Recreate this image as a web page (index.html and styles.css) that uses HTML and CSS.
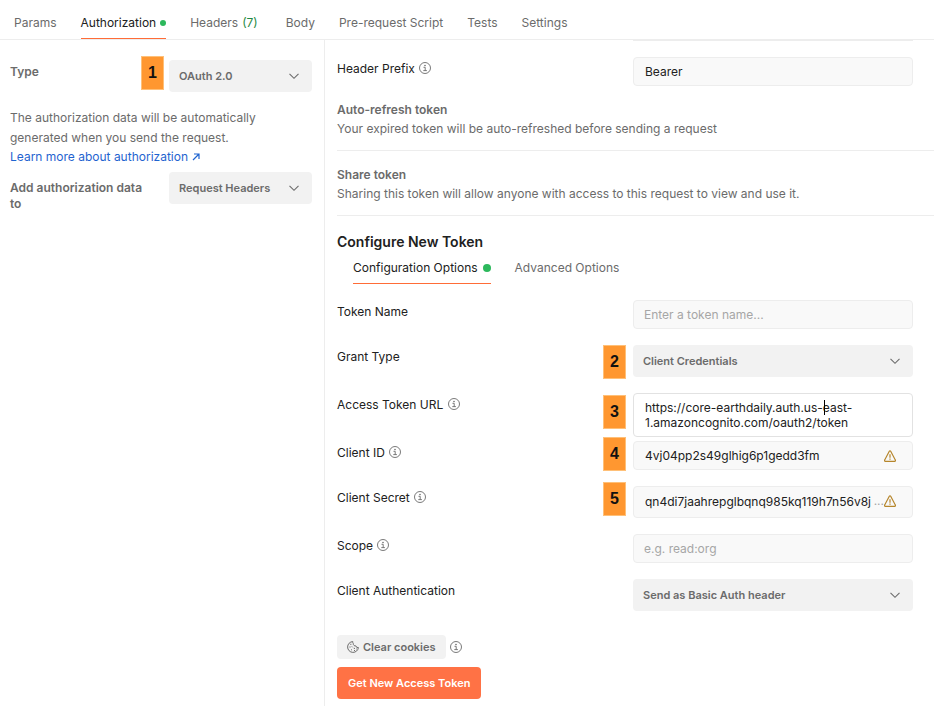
FILE: index.html
```html
<!DOCTYPE html>
<html lang="en">
<head>
<meta charset="utf-8">
<title>Authorization</title>
<meta name="viewport" content="width=device-width, initial-scale=1">
<link rel="stylesheet" href="styles.css">
</head>
<body>
<svg class="sprite" aria-hidden="true">
  <symbol id="chevron" viewBox="0 0 12 12"><path d="M1.500 3.800 6 8.300l4.500-4.500" fill="none" stroke="currentColor" stroke-width="1.100"/></symbol>
  <symbol id="info" viewBox="0 0 12 12"><circle cx="6" cy="6" r="5.500" fill="none" stroke="currentColor" stroke-width=".9"/><path d="M4.500 5.300H6.200V8.600M4.300 8.600H7.900" fill="none" stroke="currentColor" stroke-width=".9"/><circle cx="6" cy="3.500" r=".8" fill="currentColor"/></symbol>
  <symbol id="warn" viewBox="0 0 12 12"><path d="M5.300 1.200a.8.8 0 0 1 1.400 0L11.300 10a.8.8 0 0 1-.7 1.300H1.400A.8.8 0 0 1 .7 10Z" fill="none" stroke="currentColor" stroke-width="1.200"/><path d="M6 4.200v3.600M6 8.600v1.200" stroke="currentColor" stroke-width="1.200"/></symbol>
  <symbol id="cookie" viewBox="0 0 12 12"><path d="M5.800.6a5.400 5.400 0 1 0 5.600 5.900 2 2 0 0 1-2.500-1.600 2.100 2.100 0 0 1-2.600-2.300A2.400 2.400 0 0 1 5.800.6Z" fill="none" stroke="currentColor"/><path d="M3.200 3.300h1.200M2.400 6h1.200M4.800 5.400l.9.900M6.800 7.400h1.200M4 8.400l.9.700M7 9.500h1M9 8h.7" stroke="currentColor"/></symbol>
</svg>

<nav class="tabs" aria-label="Request">
  <a class="tab" href="#params">Params</a>
  <a class="tab tab--active" href="#authorization">Authorization<span class="dot"></span></a>
  <a class="tab tab--counted" href="#headers">Headers <span class="count">(7)</span></a>
  <a class="tab" href="#body">Body</a>
  <a class="tab" href="#scripts">Pre-request Script</a>
  <a class="tab" href="#tests">Tests</a>
  <a class="tab" href="#settings">Settings</a>
</nav>

<div class="layout">
  <aside class="side">
    <div class="side-row">
      <label class="side-label" for="type">Type</label>
      <div class="field">
        <span class="pin pin--raised">1</span>
        <select class="select" id="type"><option>OAuth 2.0</option></select>
        <svg class="chevron"><use href="#chevron"/></svg>
      </div>
    </div>
    <p class="help">The authorization data will be automatically generated when you send the request.</p>
    <a class="learn" href="#learn">Learn more about authorization <svg class="arrow" viewBox="0 0 8 8" aria-hidden="true"><path d="M1 7 7 1M2 1h5v5" fill="none" stroke="currentColor" stroke-width="1.200"/></svg></a>
    <div class="side-row side-row--wrapped">
      <label class="side-label" for="target">Add authorization data to</label>
      <div class="field">
        <select class="select" id="target"><option>Request Headers</option></select>
        <svg class="chevron"><use href="#chevron"/></svg>
      </div>
    </div>
  </aside>

  <main class="main">
    <div class="cut"></div>
    <div class="row">
      <label class="label" for="prefix">Header Prefix <svg class="info"><use href="#info"/></svg></label>
      <div class="field"><input class="input" id="prefix" value="Bearer"></div>
    </div>

    <section class="note">
      <h3 class="note-title">Auto-refresh token</h3>
      <p class="note-text">Your expired token will be auto-refreshed before sending a request</p>
    </section>
    <section class="note">
      <h3 class="note-title">Share token</h3>
      <p class="note-text">Sharing this token will allow anyone with access to this request to view and use it.</p>
    </section>

    <h2 class="heading">Configure New Token</h2>
    <nav class="subtabs" aria-label="Token">
      <a class="subtab subtab--active" href="#config">Configuration Options<span class="dot dot--large"></span></a>
      <a class="subtab" href="#advanced">Advanced Options</a>
    </nav>

    <form class="form">
      <div class="row">
        <label class="label" for="name">Token Name</label>
        <div class="field"><input class="input" id="name" placeholder="Enter a token name..."></div>
      </div>
      <div class="row">
        <label class="label" for="grant">Grant Type</label>
        <div class="field">
          <span class="pin">2</span>
          <select class="select" id="grant"><option>Client Credentials</option></select>
          <svg class="chevron"><use href="#chevron"/></svg>
        </div>
      </div>
      <div class="row row--tight">
        <label class="label" for="url">Access Token URL <svg class="info"><use href="#info"/></svg></label>
        <div class="field">
          <span class="pin pin--lowered">3</span>
          <textarea class="input input--area" id="url" rows="2" spellcheck="false">https://core-earthdaily.auth.us-east-1.amazoncognito.com/oauth2/token</textarea>
          <span class="caret"></span>
        </div>
      </div>
      <div class="row">
        <label class="label" for="client">Client ID <svg class="info"><use href="#info"/></svg></label>
        <div class="field">
          <span class="pin pin--raised">4</span>
          <input class="input input--warn" id="client" value="4vj04pp2s49glhig6p1gedd3fm">
          <svg class="warn"><use href="#warn"/></svg>
        </div>
      </div>
      <div class="row">
        <label class="label" for="secret">Client Secret <svg class="info"><use href="#info"/></svg></label>
        <div class="field">
          <span class="pin pin--raised">5</span>
          <input class="input input--warn input--tall" id="secret" value="qn4di7jaahrepglbqnq985kq119h7n56v8j">
          <span class="more">...</span>
          <svg class="warn"><use href="#warn"/></svg>
        </div>
      </div>
      <div class="row">
        <label class="label" for="scope">Scope <svg class="info"><use href="#info"/></svg></label>
        <div class="field"><input class="input" id="scope" placeholder="e.g. read:org"></div>
      </div>
      <div class="row">
        <label class="label" for="auth">Client Authentication</label>
        <div class="field">
          <select class="select" id="auth"><option>Send as Basic Auth header</option></select>
          <svg class="chevron"><use href="#chevron"/></svg>
        </div>
      </div>
      <div class="actions">
        <button class="btn btn--grey" type="button"><svg class="cookie"><use href="#cookie"/></svg>Clear cookies</button>
        <svg class="info"><use href="#info"/></svg>
      </div>
      <button class="btn btn--primary" type="button">Get New Access Token</button>
    </form>
  </main>
</div>
</body>
</html>
```

FILE: styles.css
```css
* { box-sizing: border-box; }
body {
  margin: 0;
  min-height: 100vh;
  display: flex;
  flex-direction: column;
  background: #fff;
  color: #212121;
  font: 12px/16px Inter, "Liberation Sans", sans-serif;
}
h2, h3, p { margin: 0; }
a { text-decoration: none; }
input, select, textarea, button { font: inherit; color: inherit; }
.sprite { position: absolute; width: 0; height: 0; }

.tabs {
  display: flex;
  gap: 24px;
  height: 40px;
  padding: 0 14px;
  border-bottom: 1px solid #ededed;
}
.tab {
  display: flex;
  align-items: center;
  gap: 4px;
  padding-top: 8px;
  border-bottom: 1px solid transparent;
  color: #6b6b6b;
  white-space: nowrap;
}
.tab--active { color: #212121; border-color: #ff6c37; }
.tab--counted { padding-right: 4px; }
.count { color: #1f8a44; }
.dot { width: 6px; height: 6px; border-radius: 50%; background: #2cb85c; }
.dot--large { width: 8px; height: 8px; }

.layout { flex: 1; display: grid; grid-template-columns: 325px 1fr; }
.side { padding: 20px 12px 0 10px; border-right: 1px solid #ededed; }
.side-row { display: flex; justify-content: space-between; }
.side-label { width: 144px; padding-top: 4px; color: #6b6b6b; font-weight: 600; }
.side-row--wrapped .side-label { padding-top: 8px; }
.side-row .field { width: 143px; }
.side-row + .help { margin-top: 16px; }
.help { color: #6b6b6b; line-height: 20px; }
.learn { display: block; margin-bottom: 4px; padding-bottom: 3px; color: #1f64d0; line-height: 17px; }
.arrow { width: 8px; height: 8px; margin-left: 1px; }

.main { padding-left: 12px; }
.cut { width: 280px; height: 1px; margin: 0 21px 16px auto; background: #ededed; }
.row {
  display: grid;
  grid-template-columns: 1fr 280px;
  padding-right: 21px;
  margin-bottom: 16px;
}
.row--tight { margin-bottom: 4px; }
.label { line-height: 24px; }
.info { width: 12px; height: 12px; color: #6b6b6b; vertical-align: -1px; }
.label .info { margin-left: 1px; }
.field { position: relative; height: max-content; }
.select, .input {
  display: block;
  width: 100%;
  border-radius: 4px;
  outline: none;
}
.select {
  height: 32px;
  padding: 0 32px 0 10px;
  border: 0;
  appearance: none;
  background: #f2f2f2;
  color: #6b6b6b;
  font-size: 11px;
  font-weight: 600;
}
.chevron { position: absolute; top: 10px; right: 12px; width: 12px; height: 12px; color: #6b6b6b; pointer-events: none; }
.input {
  height: 29px;
  padding: 0 11px;
  border: 1px solid #ededed;
  background: #f9f9f9;
}
.input::placeholder { color: #a6a6a6; opacity: 1; }
.input:placeholder-shown { padding: 0 10px; }
.input--area {
  height: 44px;
  padding: 6px 11px;
  background: #fff;
  border-color: #e2e2e2;
  line-height: 15px;
  resize: none;
  overflow: hidden;
}
.input--warn { padding-right: 36px; }
.input--tall { height: 32px; padding-bottom: 2px; }
.warn { position: absolute; top: 9px; right: 17px; width: 12px; height: 12px; color: #b6862c; }
.more { position: absolute; top: 7px; right: 29px; color: #a6a6a6; }
.caret { position: absolute; top: 7px; left: 191px; width: 1px; height: 15px; background: #000; }
.pin {
  position: absolute;
  top: 0;
  right: calc(100% + 7px);
  width: 23px;
  height: 34px;
  border: 1px solid #ffc078;
  background: #ff9730;
  color: #111;
  font: 700 16px/31px "Liberation Sans", sans-serif;
  text-align: center;
}
.pin--raised { top: -4px; }
.pin--lowered { top: 2px; }
.side-row .pin { right: calc(100% + 5px); }

.note { padding-bottom: 13px; margin-bottom: 16px; border-bottom: 1px solid #ededed; color: #6b6b6b; }
.note-title { font-size: 12px; line-height: 16px; font-weight: 600; }
.note-text { padding-top: 2px; line-height: 17px; }
.heading { font-size: 14px; line-height: 20px; font-weight: 600; }
.subtabs { display: flex; gap: 24px; padding-left: 16px; margin-bottom: 16px; }
.subtab { display: flex; align-items: center; gap: 5px; height: 32px; border-bottom: 1px solid transparent; color: #6b6b6b; }
.subtab--active { color: #212121; border-color: #ff6c37; }

.actions { display: flex; align-items: center; gap: 4px; margin: 24px 0 8px; }
.btn {
  display: flex;
  align-items: center;
  gap: 4px;
  border: 0;
  border-radius: 4px;
  font-size: 11px;
  font-weight: 600;
}
.btn--grey { height: 24px; padding: 0 10px; background: #f2f2f2; color: #6b6b6b; }
.btn--primary { height: 32px; padding: 0 11px; background: #ff7245; color: #fff; }
.cookie { width: 12px; height: 12px; }
```
